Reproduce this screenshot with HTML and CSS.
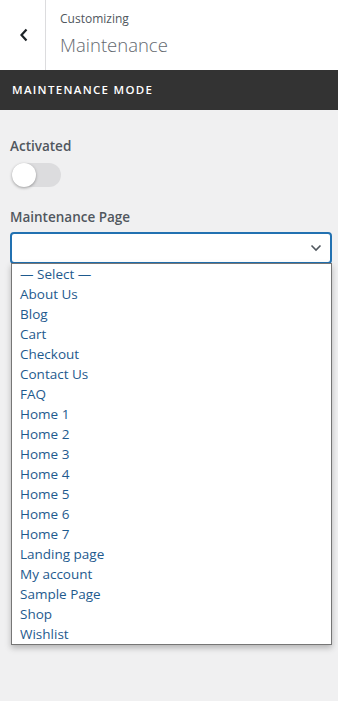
FILE: index.html
```html
<!DOCTYPE html>
<html lang="en">
<head>
    <meta charset="UTF-8">
    <meta name="viewport" content="width=device-width, initial-scale=1.0">
    <title>Customizing Maintenance</title>
    <link rel="stylesheet" href="styles.css">
</head>
<body>
    <!-- 상단 헤더 -->
    <div class="head">
        <button class="back" type="button">
            <svg width="10" height="14" viewBox="0 0 10 14">
                <path d="M7.5 1.5 L2.5 7 L7.5 12.5" fill="none" stroke="#1d2327" stroke-width="2.2"/>
            </svg>
        </button>
        <div class="head-title">
            <span class="action">Customizing</span>
            <span class="title">Maintenance</span>
        </div>
    </div>

    <div class="section-bar">Maintenance Mode</div>

    <div class="panel">
        <div class="control">
            <label class="label">Activated</label>
            <span class="toggle"><span class="knob"></span></span>
        </div>

        <div class="control">
            <label class="label">Maintenance Page</label>
            <div class="select">
                <div class="select-box">
                    <svg width="12" height="8" viewBox="0 0 12 8">
                        <path d="M1.5 1.5 L6 6 L10.5 1.5" fill="none" stroke="#50575e" stroke-width="1.6"/>
                    </svg>
                </div>
                <ul class="options">
                    <li>— Select —</li>
                    <li>About Us</li>
                    <li>Blog</li>
                    <li>Cart</li>
                    <li>Checkout</li>
                    <li>Contact Us</li>
                    <li>FAQ</li>
                    <li>Home 1</li>
                    <li>Home 2</li>
                    <li>Home 3</li>
                    <li>Home 4</li>
                    <li>Home 5</li>
                    <li>Home 6</li>
                    <li>Home 7</li>
                    <li>Landing page</li>
                    <li>My account</li>
                    <li>Sample Page</li>
                    <li>Shop</li>
                    <li>Wishlist</li>
                </ul>
            </div>
        </div>
    </div>
</body>
</html>
```

FILE: styles.css
```css
html, body{
    margin: 0;
    padding: 0;
}
body{
    width: 338px;
    height: 701px;
    background-color: #f0f0f1;
    font-family: "Open Sans", "Noto Sans", sans-serif;
    color: #50575e;
    overflow: hidden;
}

/* 헤더 */
.head{
    display: flex;
    height: 70px;
    background-color: #fff;
}
.back{
    width: 46px;
    border: none;
    border-right: 1px solid #dcdcde;
    background: #fff;
    padding: 0 0 0 2px;
    display: flex;
    align-items: center;
    justify-content: center;
}
.head-title{
    display: flex;
    flex-direction: column;
    padding: 10px 0 0 14px;
}
.action{
    font-size: 12px;
    line-height: 18px;
    color: #50575e;
}
.title{
    font-size: 18.5px;
    font-weight: 300;
    line-height: 28px;
    color: #646970;
    margin-top: 3px;
}

/* 섹션 타이틀 */
.section-bar{
    height: 40px;
    background-color: #333;
    color: #fff;
    font-size: 11.5px;
    font-weight: 600;
    letter-spacing: 1.3px;
    text-transform: uppercase;
    line-height: 40px;
    padding-left: 12px;
}

.panel{
    padding: 25px 6px 0 10px;
}
.control{
    margin-bottom: 19px;
}
.label{
    display: block;
    font-size: 13.5px;
    font-weight: 600;
    line-height: 22px;
    color: #50575e;
}

/* 토글 */
.toggle{
    display: block;
    width: 49px;
    height: 24px;
    margin: 6px 0 0 2px;
    border-radius: 12px;
    background-color: #dcdcde;
    position: relative;
}
.knob{
    position: absolute;
    left: 0;
    top: 0;
    width: 24px;
    height: 24px;
    border-radius: 50%;
    background-color: #fff;
    box-shadow: 0 1px 3px rgba(0,0,0,0.35);
}

/* 셀렉트 */
.select{
    margin-top: 4px;
}
.select-box{
    height: 28px;
    border: 2px solid #2271b1;
    border-radius: 4px;
    background-color: #fff;
    display: flex;
    align-items: center;
    justify-content: flex-end;
    padding-right: 8px;
}
.options{
    list-style: none;
    margin: -1px 0 0 1px;
    padding: 0;
    background-color: #fff;
    border: 1px solid #767676;
    box-shadow: 0 3px 6px rgba(0,0,0,0.25);
}
.options li{
    height: 20px;
    line-height: 20px;
    padding-left: 8px;
    font-size: 13.5px;
    color: #1e5a8e;
}
```
